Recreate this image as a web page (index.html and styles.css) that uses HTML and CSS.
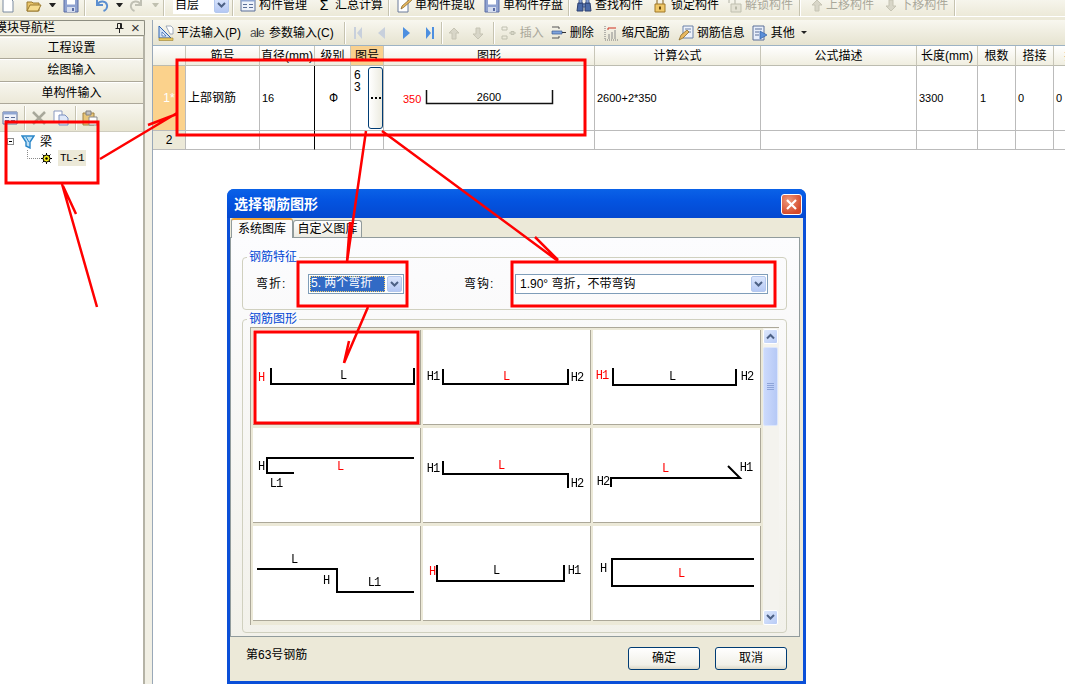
FILE: index.html
```html
<!DOCTYPE html>
<html lang="zh">
<head>
<meta charset="utf-8">
<title>选择钢筋图形</title>
<link rel="stylesheet" href="styles.css">
</head>
<body>
<svg class="defs" width="0" height="0" aria-hidden="true">
  <symbol id="i-new" viewBox="0 0 16 16"><path d="M3 1h7l3 3v11H3z" fill="#fff" stroke="#7a8aa0"/></symbol>
  <symbol id="i-open" viewBox="0 0 16 16"><path d="M1 5h5l1 1h6v8H1z" fill="#e8c46a" stroke="#9a7a30"/><path d="M4 8h11l-3 6H1z" fill="#f6dc8e" stroke="#9a7a30"/></symbol>
  <symbol id="i-save" viewBox="0 0 16 16"><path d="M1 1h14v14H1z" fill="#8fa2d0" stroke="#5a6ca4"/><path d="M4 1.500h8v6H4z" fill="#fff"/><path d="M4 10h8v5H4z" fill="#d4dcee"/><path d="M9 11h2v3H9z" fill="#5a6ca4"/></symbol>
  <symbol id="i-undo" viewBox="0 0 16 16"><path d="M3 2v6h6M3.500 7.500C6 3 12 4 13 8c.6 2.500-1 5-3.500 6" fill="none" stroke="#5c8fd0" stroke-width="2"/></symbol>
  <symbol id="i-redo" viewBox="0 0 16 16"><path d="M13 2v6H7M12.500 7.500C10 3 4 4 3 8c-.6 2.500 1 5 3.500 6" fill="none" stroke="#c0c0b4" stroke-width="2"/></symbol>
  <symbol id="i-form" viewBox="0 0 16 16"><path d="M1 2h14v12H1z" fill="#eef2fa" stroke="#5a6f98"/><path d="M1 2h14v2.500H1z" fill="#8fa6d2"/><path d="M3 7h4v1H3zM3 10h4v1H3zM9 7h4v1H9zM9 10h4v1H9z" fill="#5a6f98"/></symbol>
  <symbol id="i-pull" viewBox="0 0 16 16"><path d="M2 2h10v13H2z" fill="#fff" stroke="#6a7a9a"/><path d="M5 12l1-3 8-7 1.500 1.500-8 7z" fill="#e8b860" stroke="#806020" stroke-width=".7"/></symbol>
  <symbol id="i-find" viewBox="0 0 16 16"><path d="M2 6h5v8H1zM9 6h5l1 8H9z" fill="#4a6aa8" stroke="#2a3f70"/><path d="M3 2h3v4H3zM10 2h3v4h-3zM7 7h2v3H7z" fill="#8aa4d8" stroke="#2a3f70" stroke-width=".7"/></symbol>
  <symbol id="i-lock" viewBox="0 0 16 16"><path d="M5 7V4a3 3 0 0 1 6 0v3" fill="none" stroke="#a89060" stroke-width="1.500"/><path d="M3 7h10v8H3z" fill="#f0c868" stroke="#a07828"/><path d="M7 9.500h2v3H7z" fill="#6a4a10"/></symbol>
  <symbol id="i-unlock" viewBox="0 0 16 16"><path d="M3 6V4a3 3 0 0 1 6 0v3" fill="none" stroke="#c8c8bc" stroke-width="1.500"/><path d="M5 7h10v8H5z" fill="#e4e2d4" stroke="#c0c0b0"/><path d="M9 9.500h2v3H9z" fill="#b8b8a8"/></symbol>
  <symbol id="i-up" viewBox="0 0 16 16"><path d="M8 3l5 5h-3v6H6V8H3z" fill="#d8d6c8" stroke="#c6c4b4"/></symbol>
  <symbol id="i-down" viewBox="0 0 16 16"><path d="M8 14l5-5h-3V3H6v6H3z" fill="#d8d6c8" stroke="#c6c4b4"/></symbol>
  <symbol id="i-ruler" viewBox="0 0 16 16"><path d="M1 1v12L13 13z" fill="#cfe0f6" stroke="#2e62b0"/><path d="M4 7v4h4z" fill="#fff" stroke="#2e62b0" stroke-width=".7"/><path d="M1 13h14v2.500H1z" fill="#e8c860" stroke="#9a8030" stroke-width=".6"/><path d="M8 1h5l2 2v6h-3z" fill="#fff" stroke="#7a8aa0" stroke-width=".7"/></symbol>
  <symbol id="i-nav-first" viewBox="0 0 10 16"><path d="M1 2h2v12H1zM9 2v12L4 8z"/></symbol>
  <symbol id="i-nav-prev" viewBox="0 0 10 16"><path d="M8 2v12L1 8z"/></symbol>
  <symbol id="i-nav-next" viewBox="0 0 10 16"><path d="M2 2v12l7-6z"/></symbol>
  <symbol id="i-nav-last" viewBox="0 0 10 16"><path d="M1 2v12l5-6zM7 2h2v12H7z"/></symbol>
  <symbol id="i-ins" viewBox="0 0 16 16"><path d="M1 2h5v3H1zM1 11h5v3H1z" fill="none" stroke="#c0c0b0"/><path d="M8 8h7M10 6.500h3v3h-3z" fill="none" stroke="#c0c0b0"/></symbol>
  <symbol id="i-del" viewBox="0 0 16 16"><path d="M1 2h7M1 13h7M8 2v2M8 11v2" stroke="#555" fill="none"/><path d="M1 6h10v3H1z" fill="#7fa4dc" stroke="#3a5a90" stroke-width=".7"/><path d="M11 7.500h4" stroke="#333"/></symbol>
  <symbol id="i-scale" viewBox="0 0 16 16"><path d="M2 1v14M2 15h13" stroke="#777" stroke-dasharray="1 1" fill="none"/><path d="M5 3h8M5 3v2" stroke="#d03020" fill="none"/><path d="M6 14V9M9 14V7M12 14V5" stroke="#8a8a8a" fill="none"/></symbol>
  <symbol id="i-info" viewBox="0 0 16 16"><path d="M5 1h10v12H5z" fill="#eef2fa" stroke="#6a80a8"/><path d="M7 4h6M7 7h6" stroke="#6a80a8"/><path d="M1 15l2-5 6-5 2 2-6 6z" fill="#e8b860" stroke="#806020" stroke-width=".7"/></symbol>
  <symbol id="i-other" viewBox="0 0 16 16"><path d="M1 1h11v14H1z" fill="#e8eefa" stroke="#5a6f98"/><path d="M3 4h7M3 7h4M3 10h4" stroke="#5a6f98"/><path d="M8 6l7 4-7 4z" fill="#5b8ed8" stroke="#2e5ea8" stroke-width=".7"/></symbol>
  <symbol id="i-x" viewBox="0 0 16 16"><path d="M2 2l12 12M14 2L2 14" stroke="#a8a89a" stroke-width="2.500"/></symbol>
  <symbol id="i-copy" viewBox="0 0 16 16"><path d="M1 1h8v11H1z" fill="#fff" stroke="#8a9ac0"/><path d="M6 5h6l3 3v7H6z" fill="#dfe8f8" stroke="#7a90c0"/></symbol>
  <symbol id="i-paste" viewBox="0 0 16 16"><path d="M1 3h11v12H1z" fill="#e8c678" stroke="#a08040"/><path d="M4 1h5v4H4z" fill="#c0c0c0" stroke="#808080"/><path d="M7 7h8v8H7z" fill="#fff" stroke="#8a8a8a"/></symbol>
</svg>

<div class="app">
  <header class="topbar">
    <div class="bar-row">
      <svg class="ic"><use href="#i-new"/></svg>
      <svg class="ic m1"><use href="#i-open"/></svg><span class="caret mn2"></span>
      <svg class="ic mn2"><use href="#i-save"/></svg>
      <i class="sep mn4"></i>
      <svg class="ic"><use href="#i-undo"/></svg><span class="caret mn3"></span>
      <svg class="ic mn4"><use href="#i-redo"/></svg><span class="caret off mn1"></span>
      <i class="sep mn5"></i>
      <div class="floor"><span>自层</span><b class="drop small"><svg width="9" height="7" viewBox="0 0 9 7"><path d="M1 1l3.500 3.500L8 1" fill="none" stroke="#4d6185" stroke-width="2"/></svg></b></div>
      <i class="sep mn6"></i>
      <div class="tool mn2"><svg class="ic"><use href="#i-form"/></svg>构件管理</div>
      <div class="tool sigma"><span class="sg">Σ</span>汇总计算</div>
      <i class="sep mn4"></i>
      <div class="tool mn2"><svg class="ic"><use href="#i-pull"/></svg>单构件提取</div>
      <div class="tool"><svg class="ic"><use href="#i-save"/></svg>单构件存盘</div>
      <i class="sep mn4"></i>
      <div class="tool mn2"><svg class="ic"><use href="#i-find"/></svg>查找构件</div>
      <div class="tool"><svg class="ic"><use href="#i-lock"/></svg>锁定构件</div>
      <div class="tool off mn2"><svg class="ic"><use href="#i-unlock"/></svg>解锁构件</div>
      <i class="sep mn3"></i>
      <div class="tool off flush"><svg class="ic"><use href="#i-up"/></svg>上移构件</div>
      <div class="tool off flush"><svg class="ic"><use href="#i-down"/></svg>下移构件</div>
      <i class="sep mn3"></i>
    </div>
  </header>

  <aside class="nav">
    <div class="nav-title"><span class="nav-name">模块导航栏</span>
      <svg class="pin" width="9" height="10" viewBox="0 0 9 10"><path d="M2.500 .5h4v5h-4zM.5 5.500h8M4.500 5.500V10M5.500 1v4" fill="none" stroke="#222"/></svg>
      <span class="close">×</span></div>
    <div class="nav-btn">工程设置</div>
    <div class="nav-btn">绘图输入</div>
    <div class="nav-btn">单构件输入</div>
    <div class="nav-tools">
      <svg class="ic"><use href="#i-form"/></svg>
      <i class="sep tall"></i>
      <svg class="ic"><use href="#i-x"/></svg>
      <svg class="ic"><use href="#i-copy"/></svg>
      <i class="sep tall"></i>
      <svg class="ic"><use href="#i-paste"/></svg>
    </div>
    <div class="tree">
      <div class="tree-root">
        <span class="minus"></span>
        <svg class="funnel" width="14" height="14" viewBox="0 0 14 14"><path d="M1 1h12l-4 6v6l-4-2V7z" fill="#bfe0f6" stroke="#2a86c8" stroke-width="1.400"/><path d="M5 2l3 5" stroke="#2a86c8"/></svg>
        <span>梁</span>
      </div>
      <div class="tree-leaf">
        <svg class="conn" width="14" height="16" viewBox="0 0 14 16"><path d="M.5 0v8.500H14" fill="none" stroke="#888" stroke-dasharray="1 1"/></svg>
        <svg class="gear" width="11" height="11" viewBox="0 0 11 11"><circle cx="5.500" cy="5.500" r="3.500" fill="#f5ee20" stroke="#000"/><circle cx="5.500" cy="5.500" r="1.200" fill="#000"/><path d="M5.500 0v2M5.500 9v2M0 5.500h2M9 5.500h2M1.500 1.500l1.500 1.500M8 8l1.500 1.500M1.500 9.500L3 8M8 3l1.500-1.500" stroke="#000"/></svg>
        <span class="leaf-name">TL-1</span>
      </div>
    </div>
  </aside>

  <div class="split"></div>

  <main class="main">
    <div class="subbar">
      <div class="tool"><svg class="ic"><use href="#i-ruler"/></svg>平法输入(P)</div>
      <div class="tool"><span class="ae">a<em>I</em>e</span>参数输入(C)</div>
      <i class="sep m1"></i>
      <svg class="nav-ic off mn1"><use href="#i-nav-first"/></svg>
      <svg class="nav-ic off"><use href="#i-nav-prev"/></svg>
      <svg class="nav-ic on"><use href="#i-nav-next"/></svg>
      <svg class="nav-ic on"><use href="#i-nav-last"/></svg>
      <i class="sep mn8"></i>
      <svg class="ic mn5"><use href="#i-up"/></svg>
      <svg class="ic mn1"><use href="#i-down"/></svg>
      <i class="sep mn2"></i>
      <div class="tool off mn2"><svg class="ic"><use href="#i-ins"/></svg>插入</div>
      <div class="tool mn2"><svg class="ic"><use href="#i-del"/></svg>删除</div>
      <div class="tool"><svg class="ic"><use href="#i-scale"/></svg>缩尺配筋</div>
      <div class="tool mn1"><svg class="ic"><use href="#i-info"/></svg>钢筋信息</div>
      <div class="tool mn2"><svg class="ic"><use href="#i-other"/></svg>其他<span class="caret tiny"></span></div>
    </div>
    <div class="sheet">
      <div class="hd"></div>
      <div class="hd">筋号</div>
      <div class="hd">直径(mm)</div>
      <div class="hd">级别</div>
      <div class="hd hot">图号</div>
      <div class="hd">图形</div>
      <div class="hd">计算公式</div>
      <div class="hd">公式描述</div>
      <div class="hd">长度(mm)</div>
      <div class="hd">根数</div>
      <div class="hd">搭接</div>
      <div class="hd">损耗</div>

      <div class="rh hotrow">1*</div>
      <div class="c bar">上部钢筋</div>
      <div class="c num">16</div>
      <div class="c mid">Ф</div>
      <div class="c no"><span class="nn">6<br>3</span><span class="dots"><i></i><i></i><i></i></span></div>
      <div class="c fig">
        <svg width="210" height="64" viewBox="0 0 210 64"><path d="M42.500 24v13.500h126V24" fill="none" stroke="#111" stroke-width="1.500"/><text x="19" y="37" class="t-red t-s">350</text><text x="105" y="35" class="t-s" text-anchor="middle">2600</text></svg>
      </div>
      <div class="c num">2600+2*350</div>
      <div class="c"></div>
      <div class="c num">3300</div>
      <div class="c num">1</div>
      <div class="c num">0</div>
      <div class="c num">0</div>

      <div class="rh">2</div>
      <div class="c"></div><div class="c"></div><div class="c"></div><div class="c"></div><div class="c"></div><div class="c"></div><div class="c"></div><div class="c"></div><div class="c"></div><div class="c"></div><div class="c"></div>
    </div>
  </main>
</div>

<section class="dialog">
  <div class="dlg-title"><span>选择钢筋图形</span>
    <b class="dlg-close"><svg width="13" height="13" viewBox="0 0 13 13"><path d="M2 2l9 9M11 2l-9 9" stroke="#fff" stroke-width="2.200"/></svg></b>
  </div>
  <div class="dlg-body">
    <div class="tabs"><span class="tab active">系统图库</span><span class="tab">自定义图库</span></div>
    <div class="panel">
      <fieldset class="grp feat">
        <legend>钢筋特征</legend>
        <div class="feat-row">
          <span class="lbl first">弯折:</span>
          <div class="combo short"><span class="sel">5. 两个弯折</span><b class="drop"><svg width="9" height="7" viewBox="0 0 9 7"><path d="M1 1l3.500 3.500L8 1" fill="none" stroke="#4d6185" stroke-width="2"/></svg></b></div>
          <span class="lbl second">弯钩:</span>
          <div class="combo long"><span class="val">1.90° 弯折，不带弯钩</span><b class="drop"><svg width="9" height="7" viewBox="0 0 9 7"><path d="M1 1l3.500 3.500L8 1" fill="none" stroke="#4d6185" stroke-width="2"/></svg></b></div>
        </div>
      </fieldset>
      <fieldset class="grp shapes">
        <legend>钢筋图形</legend>
        <div class="list">
          <div class="cells">
            <div class="cell"><svg viewBox="0 0 167 94"><path d="M18 38v16h143V38"/><text x="8" y="51" text-anchor="middle" class="t-red">H</text><text x="90" y="49" text-anchor="middle">L</text></svg></div>
            <div class="cell"><svg viewBox="0 0 167 94"><path d="M20 39v15h125V39"/><text x="10" y="50" text-anchor="middle">H1</text><text x="83" y="50" text-anchor="middle" class="t-red">L</text><text x="154" y="51" text-anchor="middle">H2</text></svg></div>
            <div class="cell"><svg viewBox="0 0 167 94"><path d="M20 38v17h123V39"/><text x="9" y="49" text-anchor="middle" class="t-red">H1</text><text x="79" y="50" text-anchor="middle">L</text><text x="154" y="50" text-anchor="middle">H2</text></svg></div>
            <div class="cell"><svg viewBox="0 0 167 94"><path d="M161 30H14v15h27"/><text x="8" y="42" text-anchor="middle">H</text><text x="87" y="42" text-anchor="middle" class="t-red">L</text><text x="23" y="59" text-anchor="middle">L1</text></svg></div>
            <div class="cell"><svg viewBox="0 0 167 94"><path d="M20 33v13h125v14"/><text x="10" y="44" text-anchor="middle">H1</text><text x="78" y="41" text-anchor="middle" class="t-red">L</text><text x="154" y="59" text-anchor="middle">H2</text></svg></div>
            <div class="cell"><svg viewBox="0 0 167 94"><path d="M18 59v-9h129l-12-12"/><text x="10" y="57" text-anchor="middle">H2</text><text x="72" y="44" text-anchor="middle" class="t-red">L</text><text x="153" y="43" text-anchor="middle">H1</text></svg></div>
            <div class="cell"><svg viewBox="0 0 167 94"><path d="M4 43h80v23h77"/><text x="41" y="37" text-anchor="middle">L</text><text x="73" y="58" text-anchor="middle">H</text><text x="121" y="60" text-anchor="middle">L1</text></svg></div>
            <div class="cell"><svg viewBox="0 0 167 94"><path d="M14 39v16h127V39"/><text x="9" y="49" text-anchor="middle" class="t-red">H</text><text x="73" y="48" text-anchor="middle">L</text><text x="151" y="48" text-anchor="middle">H1</text></svg></div>
            <div class="cell"><svg viewBox="0 0 167 94"><path d="M161 33H19v27h142"/><text x="10" y="46" text-anchor="middle">H</text><text x="88" y="51" text-anchor="middle" class="t-red">L</text></svg></div>
          </div>
          <div class="scroll">
            <b class="sb-btn"><svg width="9" height="7" viewBox="0 0 9 7"><path d="M1 5.500l3.500-3.500L8 5.500" fill="none" stroke="#4d6185" stroke-width="2"/></svg></b>
            <b class="sb-thumb"><i></i><i></i><i></i><i></i></b>
            <b class="sb-btn bottom"><svg width="9" height="7" viewBox="0 0 9 7"><path d="M1 1l3.500 3.500L8 1" fill="none" stroke="#4d6185" stroke-width="2"/></svg></b>
          </div>
        </div>
      </fieldset>
    </div>
    <div class="dlg-foot">
      <span class="status">第63号钢筋</span>
      <button class="btn" type="button">确定</button>
      <button class="btn" type="button">取消</button>
    </div>
  </div>
</section>

<svg class="marks" width="1065" height="684" viewBox="0 0 1065 684" aria-hidden="true">
  <g class="boxes">
    <rect x="6" y="122" width="92" height="61"/>
    <rect x="177" y="60" width="408" height="75"/>
    <rect x="298" y="262" width="109" height="44"/>
    <rect x="512" y="262" width="263" height="44"/>
    <rect x="255" y="332" width="163" height="91"/>
  </g>
  <g class="lines">
    <path d="M100 159L177 113M148 125L177 114"/>
    <path d="M97 307L62 184M76 214L63 186"/>
    <path d="M366 131L347 262M350 222L347 262"/>
    <path d="M382 131L558 261M535 237L558 260"/>
    <path d="M368 307L344 363M349 341L344 363"/>
  </g>
</svg>
</body>
</html>
```

FILE: styles.css
```css
* { box-sizing: border-box; }
html, body { margin: 0; padding: 0; height: 100%; overflow: hidden; }
body {
  width: 1065px;
  height: 684px;
  position: relative;
  background: #fff;
  font: 12px/16px "Liberation Sans", "Noto Sans CJK SC", sans-serif;
  color: #000;
}
.defs { position: absolute; }
.app {
  display: grid;
  grid-template-columns: 145px 7px 1fr;
  grid-template-rows: 20px 1fr;
  width: 1065px;
  height: 684px;
  background: #ece9d8;
  overflow: hidden;
}
.ic { width: 16px; height: 16px; flex: none; }
.m1 { margin-left: 1px; }
.mn1 { margin-left: -1px; }
.mn2 { margin-left: -2px; }
.mn3 { margin-left: -3px; }
.mn4 { margin-left: -4px; }
.mn5 { margin-left: -5px; }
.mn6 { margin-left: -6px; }
.mn8 { margin-left: -8px; }
.sep { flex: none; width: 1px; height: 26px; background: #c6c3b0; box-shadow: 1px 0 0 #fff; }
.sep.tall { height: 24px; }
.caret { flex: none; width: 7px; height: 0; border: 3.5px solid transparent; border-top: 4px solid #222; border-bottom: 0; }
.caret.off { border-top-color: #c0c0b0; }
.caret.tiny { width: 6px; margin-left: 3px; border-width: 3px; border-bottom: 0; }

.topbar {
  grid-column: 1 / -1;
  height: 17px;
  overflow: hidden;
  background: linear-gradient(#f6f5ec, #ece9d8);
  border-bottom: 1px solid #fff;
}
.bar-row { display: flex; align-items: center; gap: 9px; height: 16px; margin-top: -3px; }
.tool { display: flex; align-items: center; gap: 3px; flex: none; white-space: nowrap; height: 16px; }
.tool.off { color: #aaa89a; }
.tool.flush { gap: 1px; }
.sg { width: 16px; text-align: center; font-size: 14px; }
.floor {
  display: flex; align-items: center; justify-content: space-between;
  width: 56px; height: 18px; padding-left: 2px; background: #fff;
}
.drop {
  display: flex; align-items: center; justify-content: center;
  flex: none; width: 15px; height: 16px;
  background: linear-gradient(#dbe6fc, #b5c8f4);
  border: 1px solid #b4c8ee;
  border-radius: 2px;
}

.nav { display: flex; flex-direction: column; min-height: 0; background: #ece9d8; border-right: 2px solid #b5b3a6; }
.nav-title {
  display: flex; align-items: center; height: 16px;
  background: #f1efe2; border: 1px solid #8d8d80; border-left: 0;
  border-radius: 0 2px 2px 0; margin-right: -2px; overflow: hidden;
}
.nav-name { margin-left: -5px; width: 120px; flex: none; white-space: nowrap; }
.pin { flex: none; }
.close { margin-left: 7px; font-size: 15px; line-height: 12px; color: #333; }
.nav-btn {
  height: 22.500px; line-height: 21px; text-align: center;
  background: linear-gradient(#f6f5ee, #ece9d8);
  border-bottom: 1px solid #aca899;
  border-top: 1px solid #fff;
}
.nav-btn:nth-child(2) { margin-top: .5px; }
.nav-tools { display: flex; align-items: center; gap: 6px; height: 27px; flex: none; padding-left: 2px; background: linear-gradient(#f8f7ef, #e8e5d2); }
.tree { flex: 1; background: #fff; padding: 2px 0 0 7px; border-top: 1px solid #cfcdbf; }
.tree-root { display: flex; align-items: center; height: 15px; }
.minus { position: relative; width: 7px; height: 7px; border: 1px solid #8a8a8a; }
.minus::after { content: ""; position: absolute; left: 1px; top: 2px; width: 3px; height: 1px; background: #000; }
.funnel { margin: 0 5px 0 7px; }
.tree-leaf { display: flex; align-items: center; height: 16px; margin-left: 20px; margin-top: 1px; }
.conn { flex: none; }
.gear { flex: none; }
.leaf-name { margin-left: 6px; padding: 0 2px; width: 28px; height: 16px; background: #ece9d8; font: 11px/16px "Liberation Mono", monospace; letter-spacing: -.6px; white-space: nowrap; }

.split { background: #f1efe4; }

.main { display: flex; flex-direction: column; min-width: 0; background: #fff; border-left: 1px solid #99a8b8; }
.subbar { display: flex; align-items: center; gap: 9px; height: 26px; flex: none; padding-left: 5px; background: linear-gradient(#f8f7ef, #e6e3d0); border-bottom: 1px solid #9db3c4; }
.subbar .sep { height: 22px; }
.ae { width: 16px; font-size: 12px; letter-spacing: -1px; color: #555; white-space: nowrap; }
.ae em { font-style: normal; color: #111; }
.nav-ic { width: 10px; height: 16px; flex: none; margin-right: 5px; }
.nav-ic.off { fill: #c8d0dc; }
.nav-ic.on { fill: #4d8fe0; }

.sheet {
  display: grid;
  grid-template-columns: 33px 74px 55px 36px 33px 211px 166px 156px 61px 38px 38px 46px;
  grid-template-rows: 20px 65px 19px;
  width: 951px;
}
.hd {
  text-align: center; line-height: 20px; white-space: nowrap;
  background: linear-gradient(#fff, #f0eee0);
  border-right: 1px solid #c8c6b8; border-bottom: 1px solid #bcbcb0;
  overflow: hidden;
}
.hd.hot { background: #f9d18f; }
.rh {
  text-align: center; line-height: 19px; background: #ece9d8;
  border-right: 1px solid #bbb; border-bottom: 1px solid #bbb;
}
.rh.hotrow { background: #fbd28c; color: #fff; line-height: 65px; }
.c {
  display: flex; align-items: center; padding-left: 2px;
  border-right: 1px solid #bbb; border-bottom: 1px solid #bbb;
  overflow: hidden; white-space: nowrap;
}
.c:nth-child(12n+3) { border-right: 1px solid #000; }
.c.num { font-size: 11px; }
.c.mid { justify-content: center; }
.c.no { align-items: flex-start; padding: 1px 0 0 3px; gap: 7px; }
.nn { line-height: 12px; margin-top: 2px; width: 7px; }
.dots {
  display: flex; align-items: center; justify-content: center; gap: 2px;
  width: 15px; height: 62px;
  background: linear-gradient(90deg, #fff, #ecebe0);
  border: 1px solid #003c74; border-radius: 3px;
}
.dots i { width: 2px; height: 2px; background: #000; }
.c.fig { padding: 0; }
.t-s { font: 11px "Liberation Sans", sans-serif; }
.t-red { fill: #f00; }

.dialog {
  position: absolute; left: 227px; top: 189px;
  display: flex; flex-direction: column;
  width: 579px; height: 495px;
  background: #0a4fd8;
  border-radius: 7px 7px 0 0;
}
.dlg-title {
  position: relative; display: flex; align-items: center;
  height: 29px; flex: none; padding-left: 7px;
  color: #fff; font-size: 14px; font-weight: bold;
  background: linear-gradient(#0a62e8, #0454e0 40%, #0448d0);
  border-radius: 7px 7px 0 0;
}
.dlg-close {
  position: absolute; left: 554px; top: 5px;
  display: flex; align-items: center; justify-content: center;
  width: 21px; height: 21px;
  background: radial-gradient(circle at 35% 30%, #ee9a7c, #d4492a 75%);
  border: 1px solid #fff; border-radius: 3px;
}
.dlg-body { flex: 1; margin: 0 3px 3px; background: #ece9d8; display: flex; flex-direction: column; min-height: 0; }
.tabs { display: flex; align-items: flex-end; height: 19px; padding-left: 1px; flex: none; }
.tab {
  height: 17px; padding: 0 3px; line-height: 16px; width: 69px; text-align: center;
  background: linear-gradient(#fff, #ecebe2);
  border: 1px solid #919b9c; border-bottom: 0; border-radius: 3px 3px 0 0;
  white-space: nowrap; overflow: hidden;
}
.tab.active {
  width: 62px; height: 20px; line-height: 19px; background: #fbfbfc;
  border-top: 2px solid #f0a53a; position: relative; top: 1px; z-index: 1; border-bottom: 0;
}
.panel {
  width: 570px; height: 400px; flex: none; padding: 13px 11px 0;
  background: linear-gradient(#fcfcfe, #f2f1ea);
  border: 1px solid #919b9c;
}
.grp { margin: 0; padding: 0; border: 1px solid #d0d0bf; border-radius: 4px; width: 545px; }
.grp legend { margin-left: 4px; padding: 0 2px; color: #0046d5; line-height: 12px; }
.feat { height: 59px; }
.feat-row { display: flex; align-items: center; height: 20px; margin-top: 11px; }
.lbl { flex: none; letter-spacing: 1px; }
.lbl.first { margin-left: 13px; width: 52px; }
.lbl.second { margin-left: 60px; width: 51px; }
.combo {
  display: flex; align-items: center; justify-content: space-between; flex: none;
  height: 20px; padding: 1px; background: #fff; border: 1px solid #7f9db9;
}
.combo.short { width: 96px; }
.combo.long { width: 253px; }
.sel {
  flex: 1; height: 16px; line-height: 15px; margin-right: 2px; padding-left: 1px;
  color: #fff; background: #316ac5; outline: 1px dotted #f5d070; outline-offset: -1px;
}
.val { padding-left: 3px; }
.shapes { height: 320px; margin-top: 3px; }
.list {
  display: flex; width: 529px; height: 298px; margin: 2px 0 0 7px;
  background: #ece9d8; border-top: 1px solid #aca899; border-left: 1px solid #aca899;
}
.cells {
  display: grid;
  grid-template-columns: repeat(3, 168px);
  grid-template-rows: repeat(3, 95px);
  gap: 3px 2px;
  padding: 2px 0 0 2px;
  width: 512px;
  height: 297px;
  overflow: hidden;
  will-change: transform;
}
.cell { background: #fff; border-right: 1px solid #aca899; border-bottom: 1px solid #aca899; }
.cell svg { display: block; width: 167px; height: 94px; }
.cell path { fill: none; stroke: #000; stroke-width: 2; }
.cell text { font: 12px "Liberation Mono", monospace; letter-spacing: -1px; }
.scroll { display: flex; flex-direction: column; width: 16px; height: 297px; background: #f4f3ee; }
.sb-btn {
  display: flex; align-items: center; justify-content: center; flex: none;
  width: 15px; height: 15px; margin-top: 1px;
  background: linear-gradient(135deg, #dde8fd, #b8cbf6);
  border: 1px solid #fff; border-radius: 2px;
}
.sb-thumb {
  display: flex; flex-direction: column; align-items: center; justify-content: center; gap: 1px; flex: none;
  width: 15px; height: 79px; margin-top: 3px;
  background: linear-gradient(90deg, #ccdafc, #b6c9f6);
  border: 1px solid #dce6fc; border-radius: 2px;
}
.sb-thumb i { width: 7px; height: 1px; background: #8ea4d8; }
.sb-btn.bottom { margin-top: auto; }
.dlg-foot { display: flex; align-items: center; flex: 1; padding-left: 16px; }
.status { flex: 1; margin-top: -9px; }
.btn {
  width: 72px; height: 23px; margin-right: 15px; margin-top: -2px; padding: 0;
  font: inherit; color: #000;
  background: linear-gradient(#fff, #f1f0e8 80%, #dcd8c8);
  border: 1px solid #003c74; border-radius: 3px;
}
.btn:last-child { margin-right: 16px; }
.marks { position: absolute; left: 0; top: 0; pointer-events: none; }
.boxes rect { fill: none; stroke: #f00; stroke-width: 3; }
.lines path { fill: none; stroke: #f00; stroke-width: 2.500; }
```
